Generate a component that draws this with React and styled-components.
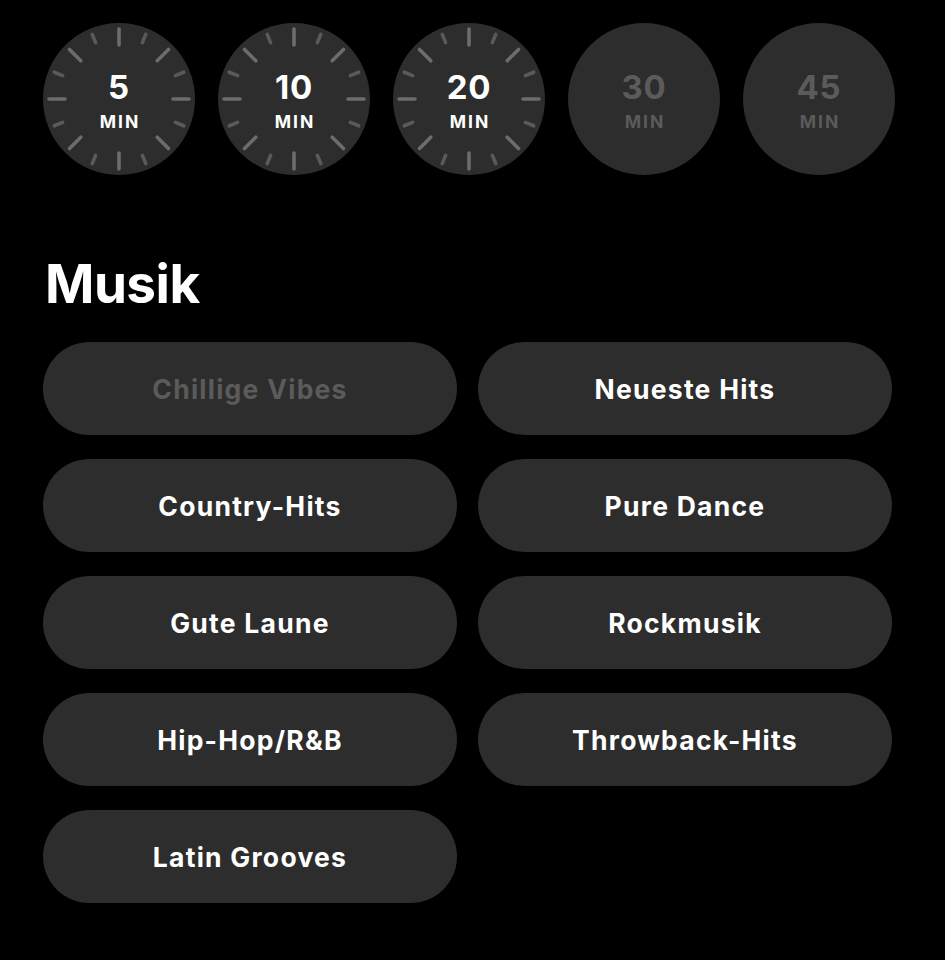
import React from "react";
import styled, { createGlobalStyle } from "styled-components";

const Global = createGlobalStyle`
  html, body { margin: 0; padding: 0; background: #000; }
  body { font-family: Inter, "Noto Sans", "Liberation Sans", sans-serif; -webkit-font-smoothing: antialiased; }
`;

const Page = styled.div`
  width: 945px;
  min-height: 960px;
  background: #000;
  box-sizing: border-box;
  padding: 23px 53px 0 43px;
`;

const DialRow = styled.div`
  display: flex;
  gap: 23px;
`;

const DialBox = styled.div`
  position: relative;
  width: 152px;
  height: 152px;
  border-radius: 50%;
  background: #2d2d2d;
  display: flex;
  flex-direction: column;
  align-items: center;
  justify-content: center;
  flex: none;
`;

const Ticks = styled.svg`
  position: absolute;
  inset: 0;
`;

const DialNum = styled.div`
  position: relative;
  font-size: 33px;
  font-weight: 700;
  line-height: 34px;
  letter-spacing: 0.8px;
  color: ${(p) => (p.$dim ? "#5b5b5b" : "#fff")};
  margin-top: 3px;
`;

const DialUnit = styled.div`
  position: relative;
  font-size: 17.5px;
  font-weight: 700;
  line-height: 18px;
  letter-spacing: 2px;
  padding-left: 2px;
  color: ${(p) => (p.$dim ? "#5b5b5b" : "#fff")};
  margin-top: 9px;
`;

const Title = styled.h2`
  margin: 79px 0 0 2px;
  font-size: 53px;
  font-weight: 700;
  line-height: 60px;
  color: #fff;
  letter-spacing: -0.5px;
`;

const Grid = styled.div`
  display: grid;
  grid-template-columns: 414px 414px;
  column-gap: 21px;
  row-gap: 24px;
  margin-top: 28px;
`;

const Pill = styled.div`
  height: 93px;
  border-radius: 47px;
  background: #2d2d2d;
  display: flex;
  align-items: center;
  justify-content: center;
  font-size: 26.5px;
  font-weight: 700;
  letter-spacing: 1.25px;
  padding-top: 1px;
  box-sizing: border-box;
  color: ${(p) => (p.$dim ? "#5b5b5b" : "#fff")};
`;

function TickMarks() {
  const c = 76;
  const lines = [];
  for (let i = 0; i < 16; i++) {
    const a = (i * 22.5 * Math.PI) / 180;
    const long = i % 2 === 0;
    const r1 = 70;
    const r2 = long ? 54 : 61;
    lines.push(
      <line
        key={i}
        x1={c + r1 * Math.sin(a)}
        y1={c - r1 * Math.cos(a)}
        x2={c + r2 * Math.sin(a)}
        y2={c - r2 * Math.cos(a)}
        stroke={long ? "#6c6c6c" : "#5a5a5a"}
        strokeWidth="3.6"
        strokeLinecap="round"
      />
    );
  }
  return (
    <Ticks width="152" height="152" viewBox="0 0 152 152">
      {lines}
    </Ticks>
  );
}

const dials = [
  { n: "5", on: true },
  { n: "10", on: true },
  { n: "20", on: true },
  { n: "30", on: false },
  { n: "45", on: false },
];

const music = [
  { t: "Chillige Vibes", dim: true },
  { t: "Neueste Hits" },
  { t: "Country-Hits" },
  { t: "Pure Dance" },
  { t: "Gute Laune" },
  { t: "Rockmusik" },
  { t: "Hip-Hop/R&B" },
  { t: "Throwback-Hits" },
  { t: "Latin Grooves" },
];

export default function App() {
  return (
    <Page>
      <Global />
      <DialRow>
        {dials.map((d) => (
          <DialBox key={d.n}>
            {d.on && <TickMarks />}
            <DialNum $dim={!d.on}>{d.n}</DialNum>
            <DialUnit $dim={!d.on}>MIN</DialUnit>
          </DialBox>
        ))}
      </DialRow>
      <Title>Musik</Title>
      <Grid>
        {music.map((m) => (
          <Pill key={m.t} $dim={m.dim}>
            {m.t}
          </Pill>
        ))}
      </Grid>
    </Page>
  );
}
